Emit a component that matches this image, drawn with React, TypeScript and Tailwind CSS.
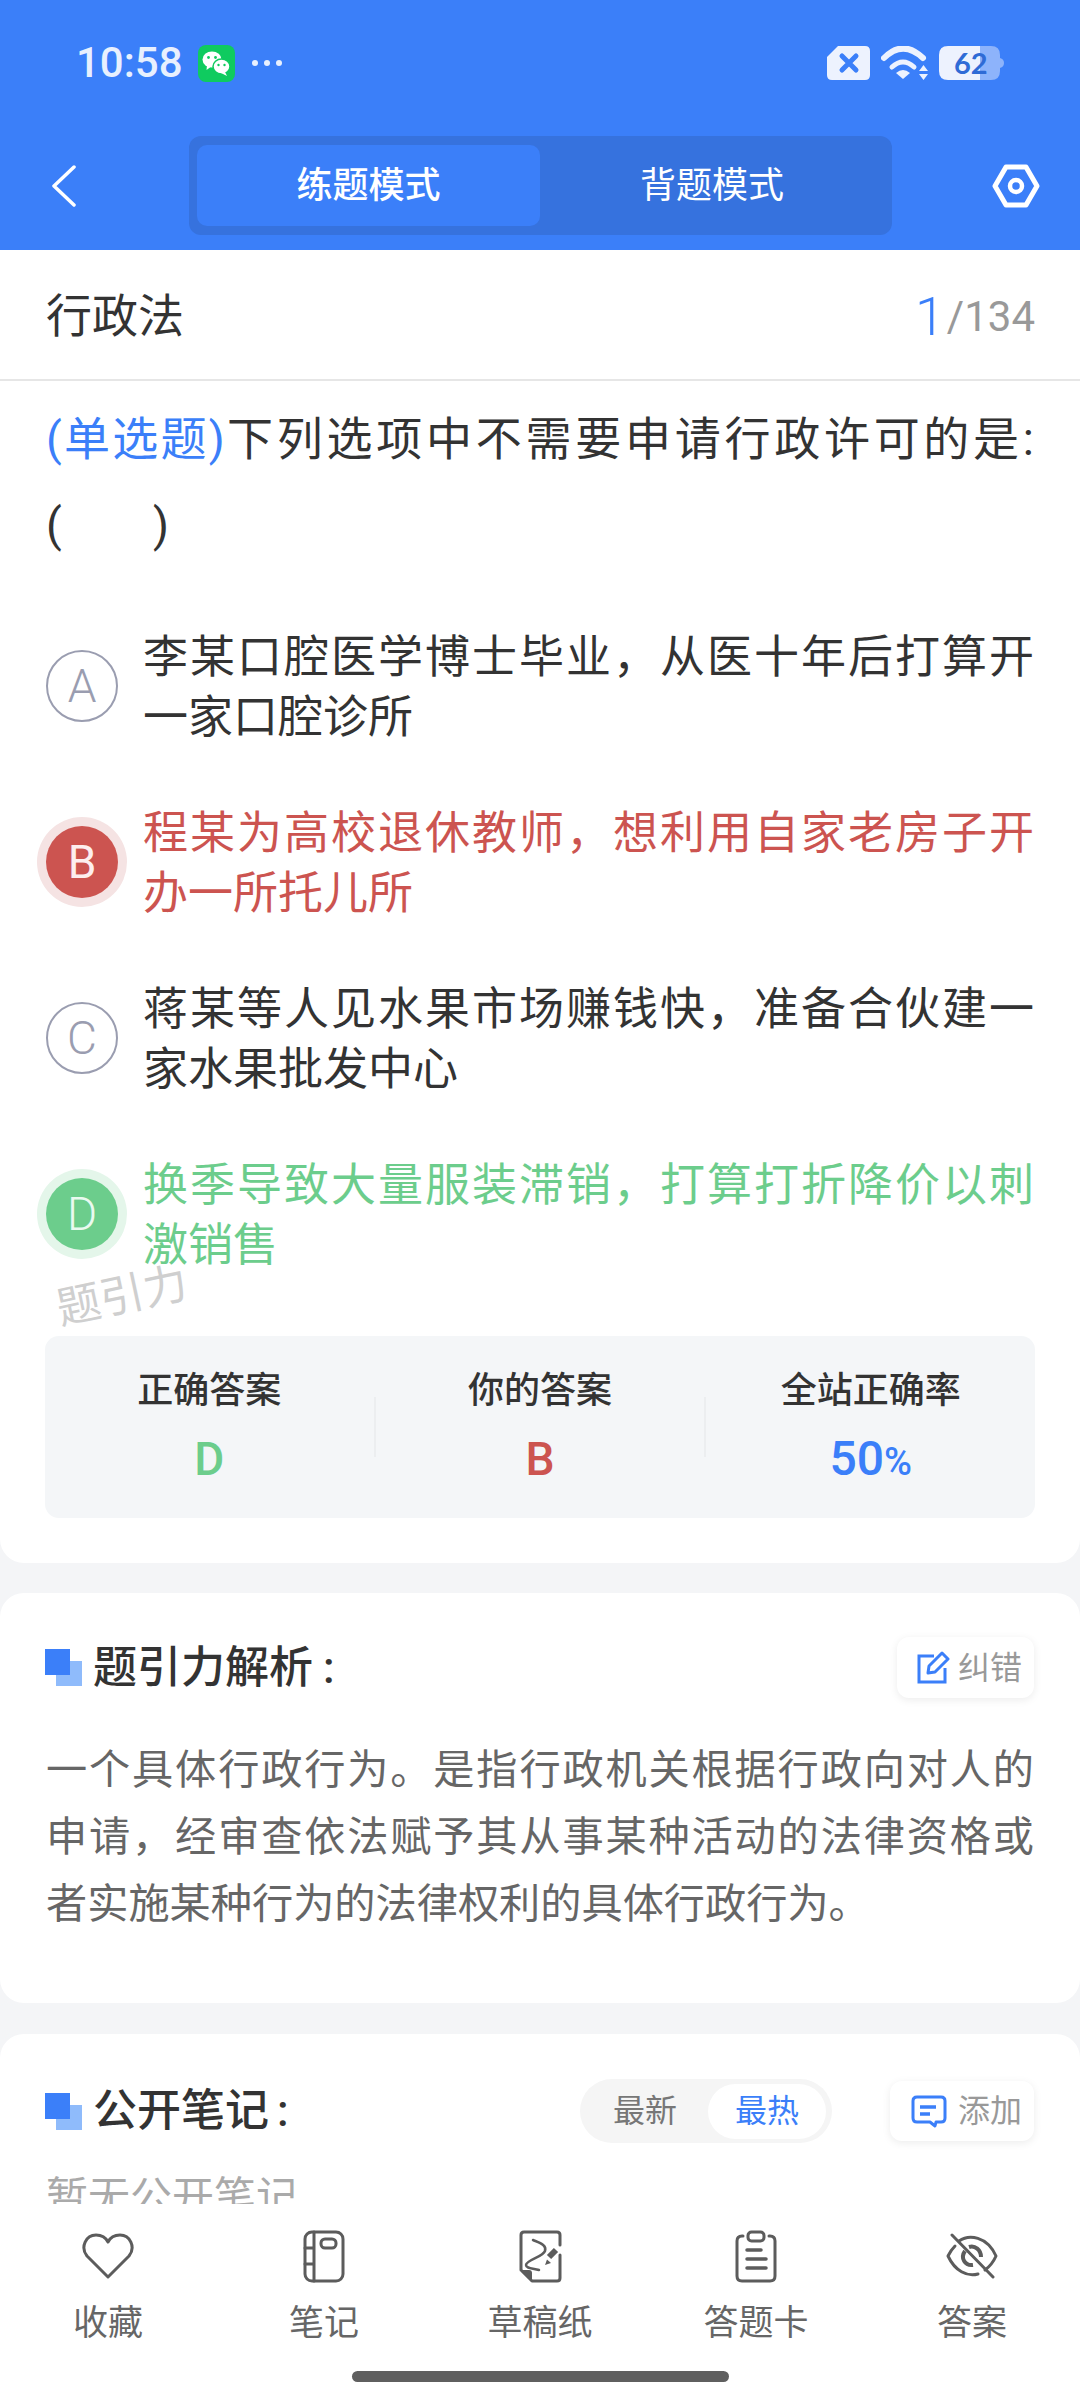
import React from "react";

const FONT = "font-['Roboto','Noto_Sans_CJK_SC',sans-serif]";

function Status() {
  return (
    <div className="flex h-[38px] items-center pl-[76px] pr-[76px]">
      <span className="w-[106px] text-[42px] font-medium leading-none text-[#e8f0fe]">10:58</span>
      <svg className="ml-[16px]" width="37" height="37" viewBox="0 0 37 37">
        <rect width="37" height="37" rx="8" fill="#0fcb5f" />
        <ellipse cx="14" cy="14.5" rx="9.5" ry="8" fill="#fff" />
        <path d="M9 20 L8.5 25 L14 21 Z" fill="#fff" />
        <ellipse cx="23.5" cy="21.5" rx="8.5" ry="7.5" fill="#fff" stroke="#0fcb5f" strokeWidth="1.5" />
        <path d="M27 27 L29 31 L23 28 Z" fill="#fff" />
        <circle cx="10.5" cy="12.5" r="1.4" fill="#0fcb5f" />
        <circle cx="17.5" cy="12.5" r="1.4" fill="#0fcb5f" />
        <circle cx="20.5" cy="20" r="1.2" fill="#0fcb5f" />
        <circle cx="26.5" cy="20" r="1.2" fill="#0fcb5f" />
      </svg>
      <div className="ml-[17px] flex gap-[6px]">
        <span className="size-[6px] rounded-full bg-[#e8f0fe]" />
        <span className="size-[6px] rounded-full bg-[#e8f0fe]" />
        <span className="size-[6px] rounded-full bg-[#e8f0fe]" />
      </div>
      <div className="ml-auto flex items-center gap-[11px]">
        <svg width="43" height="34" viewBox="0 0 43 34">
          <path d="M11 0 H38 Q43 0 43 5 V29 Q43 34 38 34 H5 Q0 34 0 29 V11 Z" fill="#edf2fe" />
          <path d="M15 10 L29 24 M29 10 L15 24" stroke="#3b7ff9" strokeWidth="5" strokeLinecap="round" />
        </svg>
        <svg width="47" height="34" viewBox="0 0 47 34">
          <path d="M3 12 Q22 -7 42 12" fill="none" stroke="#edf2fe" strokeWidth="6" strokeLinecap="round" />
          <path d="M11 21 Q22 11 33 21" fill="none" stroke="#edf2fe" strokeWidth="5" strokeLinecap="round" />
          <path d="M15 27 Q22 21 29 27 L22 33 Z" fill="#edf2fe" />
          <path d="M38 25 H47 L42.5 19 Z M38 28 H47 L42.5 34 Z" fill="#edf2fe" />
        </svg>
        <svg width="65" height="34" viewBox="0 0 65 34">
          <path d="M38 0 H52 Q61 0 61 9 V12 Q65 13 65 17 Q65 21 61 22 V25 Q61 34 52 34 H38 Z" fill="#8db3fb" />
          <path d="M9 0 H41 V34 H9 Q0 34 0 25 V9 Q0 0 9 0 Z" fill="#edf2fe" />
          <text x="15" y="28" fontSize="29" fontWeight="700" fill="#2f6bd6" fontFamily="Lato, Roboto, sans-serif">62</text>
        </svg>
      </div>
    </div>
  );
}

function Header() {
  return (
    <div className="h-[250px] shrink-0 bg-[#3b7ff9] pt-[44px]">
      <Status />
      <div className="mt-[54px] flex h-[99px] items-center pl-[50px]">
        <svg width="26" height="42" viewBox="0 0 26 42">
          <path d="M24 2 L4 21 L24 40" fill="none" stroke="#fff" strokeWidth="3.5" strokeLinecap="round" strokeLinejoin="round" />
        </svg>
        <div className="ml-[113px] flex h-[99px] w-[703px] rounded-[12px] bg-[#3672de] py-[9px] pl-[8px] pr-[8px]">
          <div className="flex h-[81px] w-[343px] items-center justify-center rounded-[10px] bg-[#3b7ff9] text-[36px] font-medium text-white">练题模式</div>
          <div className="flex h-[81px] flex-1 items-center justify-center text-[36px] text-white">背题模式</div>
        </div>
        <svg className="ml-[100px]" width="48" height="44" viewBox="0 0 48 44">
          <path d="M14 3 H34 L45 22 L34 41 H14 L3 22 Z" fill="none" stroke="#fff" strokeWidth="5" strokeLinejoin="round" />
          <circle cx="24" cy="22" r="6" fill="none" stroke="#fff" strokeWidth="4.5" />
        </svg>
      </div>
    </div>
  );
}

function Option({ letter, tone, text }: { letter: string; tone: "plain" | "bad" | "good"; text: string }) {
  return (
    <div className="flex h-[120px] items-center">
      {tone === "plain" && (
        <div className="ml-[46px] flex size-[72px] shrink-0 items-center justify-center rounded-full border-2 border-[#9a9db0] text-[46px] font-light text-[#9a9db0]">{letter}</div>
      )}
      {tone === "bad" && (
        <div className="ml-[46px] flex size-[72px] shrink-0 items-center justify-center rounded-full bg-[#cc5450] text-[46px] text-[#fdeeee] shadow-[0_0_0_9px_#f5e3e3]">{letter}</div>
      )}
      {tone === "good" && (
        <div className="ml-[46px] flex size-[72px] shrink-0 items-center justify-center rounded-full bg-[#6ccd8c] text-[46px] font-light text-[#eafaf0] shadow-[0_0_0_9px_#e4f6ea]">{letter}</div>
      )}
      <p
        className={
          "ml-[25px] w-[891px] pt-[3px] text-justify text-[45px] leading-[60px] " +
          (tone === "bad" ? "text-[#cc5450]" : tone === "good" ? "text-[#6ccd8c]" : "text-[#333333]")
        }
      >
        {text}
      </p>
    </div>
  );
}

function Stat({ label, children }: { label: string; children: React.ReactNode }) {
  return (
    <div className="flex flex-1 flex-col items-center pt-[30px]">
      <div className="text-[36px] font-medium leading-[50px] text-[#333333]">{label}</div>
      <div className="mt-[15px] flex h-[56px] items-center">{children}</div>
    </div>
  );
}

function Squares() {
  return (
    <svg width="37" height="37" viewBox="0 0 37 37" className="shrink-0">
      <rect x="11" y="12" width="26" height="25" fill="#8fbbfb" />
      <rect width="25" height="26" fill="#3b7ff9" />
    </svg>
  );
}

function QuestionCard() {
  return (
    <div className="relative rounded-b-[24px] bg-white pb-[45px]">
      <div className="flex h-[131px] items-center justify-between border-b-2 border-[#e6e6e6] pl-[46px] pr-[45px] pt-[4px]">
        <span className="text-[46px] text-[#333333]">行政法</span>
        <span className="flex items-center">
          <span className="text-[54px] font-light text-[#3b7ff9]">1</span>
          <span className="ml-[2px] text-[42px] text-[#999999]">/134</span>
        </span>
      </div>
      <p className="w-[1034px] pl-[46px] pt-[15px] text-justify text-[46px] leading-[86px] text-[#333333]">
        <span className="tracking-[-1.5px] text-[#3b7ff9]">(单选题)</span>下列选项中不需要申请行政许可的是: (&nbsp;&nbsp;&nbsp;&nbsp;&nbsp;&nbsp;&nbsp;&nbsp;)
      </p>
      <div className="mt-[58px] flex flex-col gap-[56px]">
        <Option letter="A" tone="plain" text="李某口腔医学博士毕业，从医十年后打算开一家口腔诊所" />
        <Option letter="B" tone="bad" text="程某为高校退休教师，想利用自家老房子开办一所托儿所" />
        <Option letter="C" tone="plain" text="蒋某等人见水果市场赚钱快，准备合伙建一家水果批发中心" />
        <Option letter="D" tone="good" text="换季导致大量服装滞销，打算打折降价以刺激销售" />
      </div>
      <div className="absolute left-[56px] top-[1021px] -rotate-[12deg] text-[44px] leading-[50px] text-[#cfcfcf]">题引力</div>
      <div className="mx-[45px] mt-[62px] flex h-[182px] rounded-[14px] bg-[#f4f6f8]">
        <Stat label="正确答案"><span className="text-[46px] font-medium text-[#6ccd8c]">D</span></Stat>
        <div className="mt-[61px] h-[60px] w-[2px] bg-[#eceef0]" />
        <Stat label="你的答案"><span className="text-[46px] font-medium text-[#cc5450]">B</span></Stat>
        <div className="mt-[61px] h-[60px] w-[2px] bg-[#eceef0]" />
        <Stat label="全站正确率">
          <span className="text-[48px] font-medium text-[#3b7ff9]">50<span className="text-[38px]">%</span></span>
        </Stat>
      </div>
    </div>
  );
}

function AnalysisCard() {
  return (
    <div className="mt-[30px] h-[410px] rounded-[24px] bg-white pt-[44px]">
      <div className="flex h-[61px] items-center pl-[45px] pr-[46px]">
        <Squares />
        <span className="ml-[11px] text-[44px] font-medium text-[#333333]">题引力解析<span className="ml-[10px]">:</span></span>
        <div className="ml-auto flex h-[61px] w-[137px] items-center rounded-[12px] bg-white pl-[20px] shadow-[0_2px_8px_rgba(0,0,0,0.08)]">
          <svg width="33" height="33" viewBox="0 0 33 33">
            <path d="M17 5 H2 V31 H28 V17" fill="none" stroke="#3b7ff9" strokeWidth="3" />
            <path d="M11 22 L12 15 L25 2 L31 8 L18 21 Z" fill="none" stroke="#3b7ff9" strokeWidth="3" strokeLinejoin="round" />
          </svg>
          <span className="ml-[8px] text-[32px] text-[#999999]">纠错</span>
        </div>
      </div>
      <p className="mt-[39px] w-[1034px] pl-[46px] text-justify text-[41.2px] leading-[67px] text-[#666666]">
        一个具体行政行为。是指行政机关根据行政向对人的申请，经审查依法赋予其从事某种活动的法律资格或者实施某种行为的法律权利的具体行政行为。
      </p>
    </div>
  );
}

function NotesCard() {
  return (
    <div className="mt-[31px] rounded-t-[24px] bg-white pt-[45px]">
      <div className="flex h-[64px] items-center pl-[45px] pr-[46px]">
        <Squares />
        <span className="ml-[11px] text-[44px] font-medium text-[#333333]">公开笔记<span className="ml-[8px]">:</span></span>
        <div className="ml-auto flex h-[64px] w-[252px] items-center rounded-full bg-[#f5f5f5] pl-[33px] pr-[6px]">
          <span className="text-[32px] text-[#777777]">最新</span>
          <span className="ml-auto flex h-[55px] w-[118px] items-center justify-center rounded-full bg-white text-[32px] text-[#3b7ff9]">最热</span>
        </div>
        <div className="ml-[58px] flex h-[60px] w-[144px] items-center rounded-[12px] bg-white pl-[21px] shadow-[0_2px_8px_rgba(0,0,0,0.08)]">
          <svg width="36" height="33" viewBox="0 0 36 33">
            <path d="M6 2 H30 Q34 2 34 6 V23 Q34 27 30 27 H25 L24 31 L19 27 H6 Q2 27 2 23 V6 Q2 2 6 2 Z" fill="none" stroke="#3b7ff9" strokeWidth="3" strokeLinejoin="round" />
            <path d="M9 12 H25 M9 19 H19" stroke="#3b7ff9" strokeWidth="3.5" />
          </svg>
          <span className="ml-[11px] text-[32px] text-[#999999]">添加</span>
        </div>
      </div>
      <p className="mt-[27px] pl-[46px] text-[42px] leading-[56px] text-[#aaaaaa]">暂无公开笔记</p>
    </div>
  );
}

const S = { fill: "none", stroke: "#5c5c5c", strokeWidth: 3, strokeLinecap: "round" as const, strokeLinejoin: "round" as const };

const nav: { label: string; icon: React.ReactNode }[] = [
  {
    label: "收藏",
    icon: (
      <svg width="52" height="46" viewBox="0 0 52 46">
        <path {...S} d="M26 44 L5 23 C-2 14 4 2 14 2 C20 2 24 5 26 9 C28 5 32 2 38 2 C48 2 54 14 47 23 Z" />
      </svg>
    ),
  },
  {
    label: "笔记",
    icon: (
      <svg width="42" height="53" viewBox="0 0 42 53">
        <rect {...S} x="2" y="2" width="38" height="49" rx="7" />
        <path {...S} d="M11 2 V51 M2 18 H11 M2 34 H11" />
        <rect {...S} x="18" y="9" width="15" height="9" rx="4" />
      </svg>
    ),
  },
  {
    label: "草稿纸",
    icon: (
      <svg width="44" height="53" viewBox="0 0 44 53">
        <path {...S} d="M3 40 V5 Q3 2 6 2 H39 Q42 2 42 5 V15 M42 25 V48 Q42 51 39 51 H14 L3 40" />
        <path d="M3 40 H11 Q14 40 14 43 V51 Z" fill="#5c5c5c" />
        <path {...S} strokeWidth={2.5} d="M15 10 C22 13 29 15 27 21 C25 27 8 30 8 35 C8 39 16 38 21 40" />
        <path d="M31 27 L38 20" stroke="#5c5c5c" strokeWidth="6" />
        <path d="M29 29.5 L27 35 L33 33 Z" fill="#5c5c5c" />
      </svg>
    ),
  },
  {
    label: "答题卡",
    icon: (
      <svg width="42" height="53" viewBox="0 0 42 53">
        <path {...S} d="M8 6 H7 Q2 6 2 11 V46 Q2 51 7 51 H35 Q40 51 40 46 V11 Q40 6 35 6 H34" />
        <rect {...S} x="13" y="2" width="16" height="9" rx="3.5" />
        <path {...S} strokeWidth={3.5} d="M12 20 H26 M12 29 H31 M12 38 H31" />
      </svg>
    ),
  },
  {
    label: "答案",
    icon: (
      <svg width="54" height="46" viewBox="0 0 54 46">
        <path {...S} d="M14 8 C24 1 42 3 51 23 C48 30 44 34 40 37 M33 41 C22 44 10 38 3 23 C5 19 7 16 10 13" />
        <path d="M20 18 C15 25 20 33 28 32 M24 14 C30 12 36 17 36 24" fill="none" stroke="#5c5c5c" strokeWidth="4" />
        <path {...S} d="M7 2 L48 44" />
      </svg>
    ),
  },
];

function BottomNav() {
  return (
    <div className="flex h-[196px] shrink-0 flex-col bg-white pt-[26px]">
      <div className="grid grid-cols-5">
        {nav.map((n) => (
          <div key={n.label} className="flex flex-col items-center">
            <div className="flex h-[52px] items-center justify-center">{n.icon}</div>
            <div className="mt-[18px] text-[35px] leading-[48px] text-[#666666]">{n.label}</div>
          </div>
        ))}
      </div>
      <div className="mt-[23px] h-[11px] w-[377px] self-center rounded-full bg-[#5f5f5f]" />
    </div>
  );
}

export default function App() {
  return (
    <div lang="zh-CN" className={"flex h-[2400px] w-[1080px] flex-col overflow-hidden bg-[#f4f5f7] " + FONT}>
      <Header />
      <div className="min-h-0 flex-1 overflow-hidden">
        <QuestionCard />
        <AnalysisCard />
        <NotesCard />
      </div>
      <BottomNav />
    </div>
  );
}
